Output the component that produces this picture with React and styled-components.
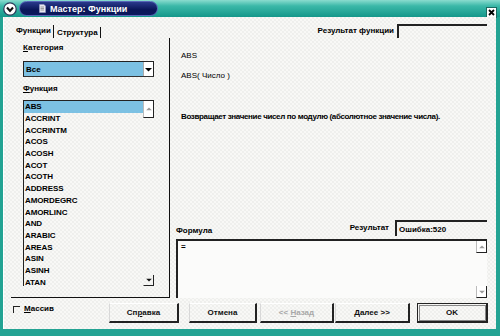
import React from 'react';
import styled, { createGlobalStyle } from 'styled-components';

const GlobalStyle = createGlobalStyle`
  html, body { margin: 0; padding: 0; background: #fff; }
  body { font-family: "Liberation Sans", Arial, sans-serif; font-size: 9px; color: #000; }
  * { box-sizing: border-box; }
`;

const Window = styled.div`
  width: 500px;
  height: 336px;
  display: flex;
  flex-direction: column;
  background: #23a393;
`;

const TitleBar = styled.div`
  height: 17px;
  display: flex;
  align-items: center;
  padding: 0 3px 0 3px;
  background: linear-gradient(#8adccf 0%, #3bb8a8 35%, #14978a 100%);
`;

const MenuButton = styled.div`
  width: 14px;
  height: 14px;
  display: flex;
`;

const TitlePill = styled.div`
  margin-left: 2px;
  width: 139px;
  height: 15px;
  border-radius: 8px;
  border: 1px solid #5866b8;
  background: linear-gradient(#2a3a8c, #0a1658 60%, #0c185e);
  display: flex;
  align-items: center;
  padding-left: 19px;
  gap: 4px;
  color: #fff;
  font-weight: bold;
  font-size: 9px;
`;

const CloseButton = styled.div`
  margin-left: auto;
  margin-top: 7px;
  width: 11px;
  height: 11px;
  display: flex;
`;

const Frame = styled.div`
  flex: 1;
  display: flex;
  padding: 0 4px 7px 3px;
`;

const Body = styled.div`
  flex: 1;
  display: flex;
  flex-direction: column;
  padding: 7px 9px 0 7px;
  background-color: #f8f8f6;
  background-image:
    radial-gradient(circle at 1px 1px, #dadbd7 0.5px, transparent 0.8px),
    radial-gradient(circle at 3px 3px, #dcddd9 0.5px, transparent 0.8px);
  background-size: 4px 4px;
  border-left: 1px solid #fff;
`;

const HeaderRow = styled.div`
  height: 14px;
  display: flex;
  align-items: stretch;
`;

const Tabs = styled.div`
  display: flex;
  margin-left: 2px;
  align-items: flex-end;
`;

const Tab = styled.div`
  height: ${p => (p.$active ? 13 : 11)}px;
  display: flex;
  align-items: center;
  padding: 0 2px 0 3px;
  border-right: 1px solid #111;
  font-weight: bold;
  font-size: 8px;
  line-height: 9px;
  margin-top: ${p => (p.$active ? 0 : 2)}px;
  padding-bottom: ${p => (p.$active ? 2 : 0)}px;
`;

const FuncResult = styled.div`
  margin-left: auto;
  display: flex;
  align-items: center;
  gap: 3px;
`;

const Label = styled.span`
  font-weight: bold;
  font-size: 8px;
  line-height: 10px;
  white-space: nowrap;
  display: block;
`;

const Field = styled.div`
  width: ${p => p.$w}px;
  height: ${p => p.$h}px;
  border-top: 2px solid #222;
  border-left: 2px solid #222;
  display: flex;
  align-items: center;
  padding-left: 2px;
  font-size: 8px;
  font-weight: bold;
`;

const Main = styled.div`
  height: 260px;
  display: flex;
`;

const LeftPanel = styled.div`
  width: 159px;
  border-right: 1px solid #111;
  border-bottom: 1px solid #111;
  padding: 5px 15px 0 12px;
  display: flex;
  flex-direction: column;
`;

const Select = styled.div`
  margin: 8px 0 7px;
  height: 16px;
  display: flex;
  border-top: 1px solid #222;
  border-left: 1px solid #222;
  border-bottom: 1px solid #333;
  background: #7cc1e3;
`;

const SelectValue = styled.div`
  flex: 1;
  display: flex;
  align-items: center;
  padding-left: 2px;
  font-weight: bold;
  font-size: 8px;
`;

const DropButton = styled.div`
  width: 11px;
  background: #fff;
  border-left: 1px solid #aaa;
  border-right: 1px solid #222;
  display: flex;
  align-items: center;
  justify-content: center;
`;

const List = styled.div`
  margin-top: 6px;
  height: 186px;
  display: flex;
  border-left: 1px solid #222;
  border-top: 1px solid #222;
  overflow: hidden;
`;

const Items = styled.div`
  flex: 1;
  display: flex;
  flex-direction: column;
`;

const Item = styled.div`
  height: 11.7px;
  flex: none;
  display: flex;
  align-items: center;
  padding-left: 1px;
  font-size: 8px;
  font-weight: bold;
  letter-spacing: -0.1px;
  background: ${p => (p.$selected ? '#7cc1e3' : 'transparent')};
`;

const ScrollBar = styled.div`
  width: 11px;
  display: flex;
  flex-direction: column;
  justify-content: space-between;
`;

const ScrollBtn = styled.div`
  height: ${p => p.$h}px;
  background: ${p => (p.$flat ? 'transparent' : '#fff')};
  border-left: 1px solid ${p => (p.$flat ? 'transparent' : '#bbb')};
  border-right: 1px solid #222;
  border-bottom: 1px solid #222;
  display: flex;
  align-items: center;
  justify-content: center;
`;

const RightArea = styled.div`
  flex: 1;
  margin-left: 6px;
  display: flex;
  flex-direction: column;
`;

const InfoLine = styled.div`
  margin-top: ${p => p.$mt}px;
  padding-left: 5px;
  font-size: 8px;
  line-height: 10px;
  white-space: nowrap;
  font-weight: ${p => (p.$bold ? 'bold' : 'normal')};
  letter-spacing: ${p => (p.$bold ? '-0.35px' : '0')};
`;

const FormulaHead = styled.div`
  margin-top: auto;
  display: flex;
  align-items: flex-end;
  justify-content: space-between;
`;

const ResultGroup = styled.div`
  display: flex;
  align-items: center;
  gap: 6px;
`;

const FormulaBox = styled.div`
  margin-top: 3px;
  height: 59px;
  display: flex;
  border-top: 2px solid #222;
  border-left: 2px solid #222;
  background: #fbfbfa;
`;

const FormulaText = styled.div`
  flex: 1;
  padding: 1px 3px;
  font-size: 8px;
  font-weight: bold;
  line-height: 9px;
`;

const Footer = styled.div`
  flex: 1;
  display: flex;
  align-items: flex-start;
  padding-top: 5px;
`;

const Check = styled.div`
  margin-left: 2px;
  margin-top: 1px;
  display: flex;
  align-items: center;
  gap: 4px;
  height: 10px;
`;

const CheckBox = styled.div`
  width: 7px;
  height: 7px;
  border-top: 1px solid #222;
  border-left: 1px solid #222;
`;

const Buttons = styled.div`
  margin-left: auto;
  margin-right: -1px;
  display: flex;
`;

const Button = styled.div`
  width: ${p => p.$w}px;
  margin-left: ${p => p.$ml}px;
  height: 20px;
  display: flex;
  align-items: center;
  justify-content: center;
  font-size: 8px;
  font-weight: bold;
  white-space: pre;
  color: ${p => (p.$disabled ? '#a8a8a8' : '#111')};
  border-top: 1px solid #fff;
  border-left: 1px solid ${p => (p.$default ? '#222' : '#d8d8d8')};
  border-right: 2px solid #222;
  border-bottom: 2px solid #222;
  ${p => p.$default && 'border-top: 1px solid #222; outline: 1px solid #888; outline-offset: -3px;'}
`;

const U = styled.span`
  text-decoration: underline;
`;

const Tri = ({ dir = 'down', color = '#000', size = 5 }) => (
  <svg width={size + 2} height={size} viewBox="0 0 7 5">
    {dir === 'down'
      ? <path d="M0 1 H7 L3.5 4.5 Z" fill={color} />
      : <path d="M0 4 H7 L3.5 0.5 Z" fill={color} />}
  </svg>
);

const functions = [
  'ABS', 'ACCRINT', 'ACCRINTM', 'ACOS', 'ACOSH', 'ACOT', 'ACOTH', 'ADDRESS',
  'AMORDEGRC', 'AMORLINC', 'AND', 'ARABIC', 'AREAS', 'ASIN', 'ASINH', 'ATAN',
];

export default function App() {
  return (
    <>
      <GlobalStyle />
      <Window>
        <TitleBar>
          <MenuButton>
            <svg width="14" height="14" viewBox="0 0 14 14">
              <circle cx="7" cy="7" r="6.2" fill="#fff" stroke="#2a3a5a" strokeWidth="1.2" />
              <path d="M4 5.5 L7 9 L10 5.5" fill="none" stroke="#111" strokeWidth="2" />
            </svg>
          </MenuButton>
          <TitlePill>
            <svg width="7" height="9" viewBox="0 0 7 9">
              <path d="M0.5 0.5 H5 L6.5 2 V8.5 H0.5 Z" fill="#e8e8f0" stroke="#9aa0c8" strokeWidth="0.6" />
              <path d="M1.5 3 H5 M1.5 4.5 H5 M1.5 6 H5" stroke="#666" strokeWidth="0.6" />
            </svg>
            <span>Мастер: Функции</span>
          </TitlePill>
          <CloseButton>
            <svg width="11" height="11" viewBox="0 0 11 11">
              <rect x="0.5" y="0.5" width="10" height="10" fill="#fff" stroke="#1a6a60" />
              <path d="M3 3 L8 8 M8 3 L3 8" stroke="#000" strokeWidth="1.8" />
            </svg>
          </CloseButton>
        </TitleBar>
        <Frame>
          <Body>
            <HeaderRow>
              <Tabs>
                <Tab $active>Функции</Tab>
                <Tab>Структура</Tab>
              </Tabs>
              <FuncResult>
                <Label>Результат функции</Label>
                <Field $w={90} $h={14} />
              </FuncResult>
            </HeaderRow>
            <Main>
              <LeftPanel>
                <Label><U>К</U>атегория</Label>
                <Select>
                  <SelectValue>Все</SelectValue>
                  <DropButton><Tri /></DropButton>
                </Select>
                <Label><U>Ф</U>ункция</Label>
                <List>
                  <Items>
                    {functions.map((f, i) => (
                      <Item key={f} $selected={i === 0}>{f}</Item>
                    ))}
                  </Items>
                  <ScrollBar>
                    <ScrollBtn $h={17}><Tri dir="up" color="#999" size={4} /></ScrollBtn>
                    <ScrollBtn $h={11} $flat><Tri color="#111" size={4} /></ScrollBtn>
                  </ScrollBar>
                </List>
              </LeftPanel>
              <RightArea>
                <InfoLine $mt={13}>ABS</InfoLine>
                <InfoLine $mt={10}>ABS( Число )</InfoLine>
                <InfoLine $mt={31} $bold>Возвращает значение чисел по модулю (абсолютное значение числа).</InfoLine>
                <FormulaHead>
                  <Label>Формула</Label>
                  <ResultGroup>
                    <Label>Результат</Label>
                    <Field $w={92} $h={16}>Ошибка:520</Field>
                  </ResultGroup>
                </FormulaHead>
                <FormulaBox>
                  <FormulaText>=</FormulaText>
                  <ScrollBar>
                    <ScrollBtn $h={12}><Tri dir="up" color="#999" size={4} /></ScrollBtn>
                    <ScrollBtn $h={12}><Tri color="#999" size={4} /></ScrollBtn>
                  </ScrollBar>
                </FormulaBox>
              </RightArea>
            </Main>
            <Footer>
              <Check>
                <CheckBox />
                <Label><U>М</U>ассив</Label>
              </Check>
              <Buttons>
                <Button $w={70} $ml={0}>Сп<U>р</U>авка</Button>
                <Button $w={68} $ml={10}>Отмена</Button>
                <Button $w={74} $ml={3} $disabled>{'<< '}<U>Н</U>азад</Button>
                <Button $w={75} $ml={1}><U>Д</U>алее {'>>'}</Button>
                <Button $w={71} $ml={7} $default>OK</Button>
              </Buttons>
            </Footer>
          </Body>
        </Frame>
      </Window>
    </>
  );
}
